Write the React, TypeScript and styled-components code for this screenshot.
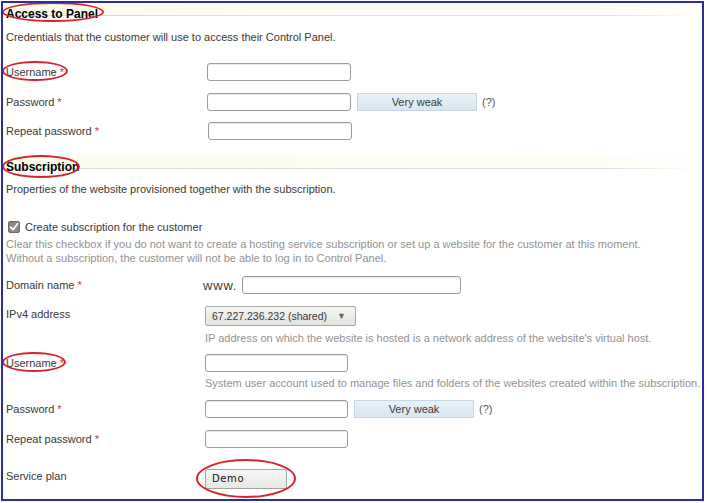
import React from "react";
import styled, { createGlobalStyle } from "styled-components";

const Global = createGlobalStyle`
    body {
        margin: 0;
        background: #fff;
        font-family: "Liberation Sans", Arial, sans-serif;
        font-size: 11px;
        color: #333;
    }
`;

const Frame = styled.div`
    box-sizing: border-box;
    width: 703px;
    height: 500px;
    margin: 1px 0 0 1px;
    border: 2px solid #2d2d9f;
    padding: 0 4px 0 3px;
    overflow: hidden;
`;

const Head = styled.div<{ $gap: number }>`
    margin-top: ${(p) => p.$gap}px;
    height: 17px;
    box-sizing: border-box;
    padding: 5px 0 0 0;
    font-size: 12px;
    line-height: 12px;
    font-weight: bold;
    color: #000;
    background:
        linear-gradient(to right, #dcdcd2 0, #e2e2d8 88%, rgba(255, 255, 255, 0) 100%) no-repeat 0 12px / 100% 1px,
        linear-gradient(to right, #fcfbee 0, #fefdf5 85%, #ffffff 100%) no-repeat 0 0 / 100% 12px;
`;

const Marked = styled.span`
    position: relative;
    display: inline-block;
`;

const Ring = styled.span<{ $l: number; $t: number; $w: number; $h: number }>`
    position: absolute;
    left: ${(p) => p.$l}px;
    top: ${(p) => p.$t}px;
    width: ${(p) => p.$w}px;
    height: ${(p) => p.$h}px;
    box-sizing: border-box;
    border: 2px solid #d8222e;
    border-radius: 50%;
    pointer-events: none;
`;

const Text = styled.div<{ $gap: number; $muted?: boolean }>`
    margin-top: ${(p) => p.$gap}px;
    line-height: 14px;
    color: ${(p) => (p.$muted ? "#939393" : "#3a3a3a")};
    white-space: nowrap;
`;

const Row = styled.div<{ $gap: number; $col: number }>`
    margin-top: ${(p) => p.$gap}px;
    display: grid;
    grid-template-columns: ${(p) => p.$col}px 1fr;
    align-items: start;
`;

const Label = styled.div<{ $lh?: number }>`
    line-height: ${(p) => p.$lh ?? 18}px;
    color: #3a3a3a;
    white-space: nowrap;
`;

const Req = styled.span`
    color: #b83a3a;
`;

const Control = styled.div`
    display: flex;
    align-items: center;
    gap: 6px;
`;

const Field = styled.div`
    display: flex;
    flex-direction: column;
`;

const Hint = styled.div<{ $gap: number }>`
    margin-top: ${(p) => p.$gap}px;
    line-height: 14px;
    color: #939393;
    white-space: nowrap;
`;

const Input = styled.input<{ $w: number }>`
    box-sizing: border-box;
    width: ${(p) => p.$w}px;
    height: 18px;
    margin: 0;
    padding: 0 3px;
    border: 1px solid #9c9c9c;
    border-radius: 3px;
    background: #fff;
    box-shadow: inset 0 1px 1px #e6e6e6;
    font: inherit;
`;

const Strength = styled.div`
    box-sizing: border-box;
    width: 120px;
    height: 18px;
    line-height: 16px;
    text-align: center;
    border: 1px solid #c9d7e3;
    background: linear-gradient(#e8f1f8, #d9e6f1);
    color: #3a3a3a;
`;

const Help = styled.span`
    color: #555;
    margin-left: -1px;
`;

const Prefix = styled.span`
    color: #3a3a3a;
    font-size: 13px;
    letter-spacing: 0.8px;
    margin-right: -1px;
`;

const Select = styled.div`
    box-sizing: border-box;
    width: 151px;
    height: 20px;
    display: flex;
    align-items: center;
    justify-content: space-between;
    padding: 0 9px 0 6px;
    border: 1px solid #a8a8a8;
    border-radius: 2px;
    background: linear-gradient(#f6f6f4, #e2e2de);
    font-size: 10.5px;
    color: #3a3a3a;
    white-space: nowrap;
`;

const Arrow = styled.span`
    font-size: 9px;
    color: #6a6a6a;
`;

const PlanButton = styled.div`
    box-sizing: border-box;
    width: 82px;
    height: 20px;
    line-height: 18px;
    padding-left: 6px;
    border: 1px solid #a4a4a0;
    border-radius: 2px;
    background: linear-gradient(#f7f7f5, #e6e6e2);
    font-family: "DejaVu Sans", Verdana, sans-serif;
    font-size: 10px;
    letter-spacing: 0.6px;
    color: #111;
`;

const Check = styled.label`
    display: flex;
    align-items: center;
    gap: 5px;
    padding-left: 2px;
    color: #3a3a3a;
`;

function CheckBox() {
    return (
        <svg width="12" height="12" viewBox="0 0 12 12">
            <rect x="0.5" y="0.5" width="11" height="11" rx="1.5" fill="#8b8782" stroke="#6f6b66" />
            <path d="M2.6 6.2 L5 8.7 L9.6 2.8" fill="none" stroke="#fff" strokeWidth="1.8" strokeLinecap="round" strokeLinejoin="round" />
        </svg>
    );
}

function PasswordControl({ w }: { w: number }) {
    return (
        <Control>
            <Input $w={w} type="password" />
            <Strength>Very weak</Strength>
            <Help>(?)</Help>
        </Control>
    );
}

export default function App(): React.ReactElement {
    return (
        <>
            <Global />
            <Frame>
                <Head $gap={0}>
                    <Marked>
                        Access to Panel
                        <Ring $l={-4} $t={-6} $w={102} $h={20} />
                    </Marked>
                </Head>
                <Text $gap={10}>Credentials that the customer will use to access their Control Panel.</Text>

                <Row $gap={19} $col={201}>
                    <Label>
                        <Marked>
                            Username <Req>*</Req>
                            <Ring $l={-4} $t={-2} $w={66} $h={20} />
                        </Marked>
                    </Label>
                    <Control>
                        <Input $w={144} />
                    </Control>
                </Row>
                <Row $gap={12} $col={201}>
                    <Label>
                        Password <Req>*</Req>
                    </Label>
                    <PasswordControl w={144} />
                </Row>
                <Row $gap={11} $col={202}>
                    <Label>
                        Repeat password <Req>*</Req>
                    </Label>
                    <Control>
                        <Input $w={144} type="password" />
                    </Control>
                </Row>

                <Head $gap={16}>
                    <Marked>
                        Subscription
                        <Ring $l={-4} $t={-6} $w={78} $h={23} />
                    </Marked>
                </Head>
                <Text $gap={9}>Properties of the website provisioned together with the subscription.</Text>

                <Text $gap={24}>
                    <Check>
                        <CheckBox />
                        Create subscription for the customer
                    </Check>
                </Text>
                <Text $gap={3} $muted>
                    Clear this checkbox if you do not want to create a hosting service subscription or set up a website for the customer at this moment.
                    <br />
                    Without a subscription, the customer will not be able to log in to Control Panel.
                </Text>

                <Row $gap={11} $col={197}>
                    <Label>
                        Domain name <Req>*</Req>
                    </Label>
                    <Control>
                        <Prefix>www.</Prefix>
                        <Input $w={219} />
                    </Control>
                </Row>
                <Row $gap={12} $col={199}>
                    <Label $lh={16}>IPv4 address</Label>
                    <Field>
                        <Select>
                            67.227.236.232 (shared)
                            <Arrow>▼</Arrow>
                        </Select>
                        <Hint $gap={5}>
                            IP address on which the website is hosted is a network address of the website's virtual host.
                        </Hint>
                    </Field>
                </Row>
                <Row $gap={9} $col={199}>
                    <Label>
                        <Marked>
                            Username <Req>*</Req>
                            <Ring $l={-4} $t={-2} $w={64} $h={20} />
                        </Marked>
                    </Label>
                    <Field>
                        <Input $w={143} />
                        <Hint $gap={4}>
                            System user account used to manage files and folders of the websites created within the subscription.
                        </Hint>
                    </Field>
                </Row>
                <Row $gap={10} $col={199}>
                    <Label>
                        Password <Req>*</Req>
                    </Label>
                    <PasswordControl w={143} />
                </Row>
                <Row $gap={12} $col={199}>
                    <Label>
                        Repeat password <Req>*</Req>
                    </Label>
                    <Control>
                        <Input $w={143} type="password" />
                    </Control>
                </Row>
                <Row $gap={21} $col={199}>
                    <Label $lh={14}>Service plan</Label>
                    <Control>
                        <Marked>
                            <PlanButton>Demo</PlanButton>
                            <Ring $l={-9} $t={-10} $w={100} $h={39} />
                        </Marked>
                    </Control>
                </Row>
            </Frame>
        </>
    );
}
